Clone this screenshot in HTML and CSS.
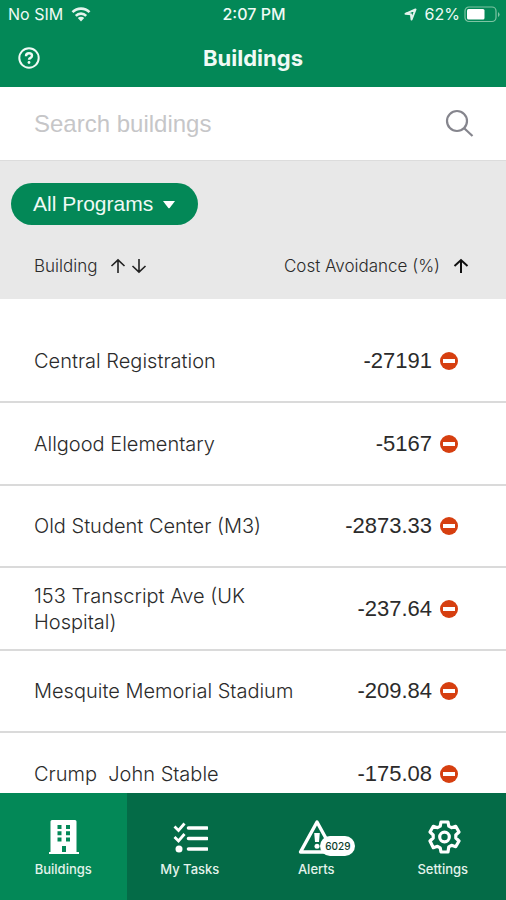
FILE: index.html
```html
<!DOCTYPE html>
<html lang="en">
<head>
<meta charset="utf-8">
<meta name="viewport" content="width=device-width, initial-scale=1">
<title>Buildings</title>
<link rel="stylesheet" href="styles.css">
</head>
<body>
<div class="app">
  <header class="header">
    <div class="status">
      <div class="status-left">
        <span>No SIM</span>
        <svg width="20" height="15" viewBox="0 0 20 15" aria-hidden="true"><g fill="none" stroke="#e4f3ec" stroke-width="2.6"><path d="M1.5 5.2a12 12 0 0 1 17 0"/><path d="M4.8 8.8a7.4 7.4 0 0 1 10.4 0"/></g><path d="M6.8 11a4.6 4.6 0 0 1 6.4 0L10 14.4z" fill="#e4f3ec"/></svg>
      </div>
      <span class="clock">2:07 PM</span>
      <div class="status-right">
        <svg width="13" height="13" viewBox="0 0 13 13" aria-hidden="true"><path d="M1.5 5.8L11.5 1.5L7.6 11.5L6.9 6.2z" fill="none" stroke="#e4f3ec" stroke-width="2" stroke-linejoin="round"/></svg>
        <span>62%</span>
        <svg width="36" height="17" viewBox="0 0 36 17" aria-hidden="true"><rect x="1" y="1" width="31" height="14.500" rx="4" fill="none" stroke="#7fc4a3" stroke-width="1.2"/><rect x="3" y="3" width="17.500" height="10.500" rx="1.500" fill="#fff"/><path d="M34 6v5q1.600-1 1.600-2.500T34 6z" fill="#7fc4a3"/></svg>
      </div>
    </div>
    <div class="titlebar">
      <button class="icon-button" type="button" aria-label="Help">
        <svg width="22" height="22" viewBox="0 0 22 22" aria-hidden="true"><circle cx="11" cy="11" r="9.700" fill="none" stroke="#f0faf5" stroke-width="2"/><path d="M8 9.200q0-2.900 3-2.900t3 2.400q0 1.300-1.500 2.200t-1.500 1.900" fill="none" stroke="#f0faf5" stroke-width="2.400"/><circle cx="11" cy="15.500" r="1.400" fill="#f0faf5"/></svg>
      </button>
      <h1>Buildings</h1>
    </div>
  </header>
  <main class="content">
    <form class="search">
      <input type="search" placeholder="Search buildings" aria-label="Search buildings">
      <button class="icon-button" type="button" aria-label="Search">
        <svg width="30" height="30" viewBox="0 0 30 30" aria-hidden="true"><g fill="none" stroke="#85858d" stroke-width="2.200"><circle cx="12" cy="12" r="10"/><path d="M19.200 19.200L27.500 27"/></g></svg>
      </button>
    </form>
    <div class="filter">
      <button class="pill" type="button">All Programs
        <svg width="14" height="9" viewBox="0 0 14 9" aria-hidden="true"><path d="M1 1h12L7.700 8q-.7.700-1.400 0z" fill="#fff"/></svg>
      </button>
    </div>
    <table class="buildings">
      <colgroup><col class="col-name"><col class="col-shared"><col class="col-value"></colgroup>
      <thead>
        <tr>
          <th class="name" scope="col"><button class="sort" type="button">Building
            <svg width="38" height="16" viewBox="0 0 38 16" aria-hidden="true"><g fill="none" stroke="#222" stroke-width="1.600"><path d="M8 15V2M1.500 8L8 1.800L14.500 8"/><path d="M29 1v13M22.500 8l6.500 6.200L35.500 8"/></g></svg></button></th>
          <th class="value" scope="col" colspan="2"><button class="sort" type="button">Cost Avoidance (%)
            <svg width="16" height="16" viewBox="0 0 16 16" aria-hidden="true"><path d="M8 15V2M1.500 8L8 2L14.500 8" fill="none" stroke="#111" stroke-width="2"/></svg></button></th>
        </tr>
      </thead>
      <tbody>
        <tr class="spacer"><td colspan="3"></td></tr>
        <tr><td class="name" colspan="2">Central Registration</td><td class="value"><span class="amount">-27191 <i class="minus"></i></span></td></tr>
        <tr><td class="name" colspan="2">Allgood Elementary</td><td class="value"><span class="amount">-5167 <i class="minus"></i></span></td></tr>
        <tr><td class="name" colspan="2">Old Student Center (M3)</td><td class="value"><span class="amount">-2873.33 <i class="minus"></i></span></td></tr>
        <tr><td class="name" colspan="2">153 Transcript Ave (UK Hospital)</td><td class="value"><span class="amount">-237.64 <i class="minus"></i></span></td></tr>
        <tr><td class="name" colspan="2">Mesquite Memorial Stadium</td><td class="value"><span class="amount">-209.84 <i class="minus"></i></span></td></tr>
        <tr><td class="name" colspan="2">Crump&nbsp; John Stable</td><td class="value"><span class="amount">-175.08 <i class="minus"></i></span></td></tr>
      </tbody>
    </table>
  </main>
  <nav class="tabs">
    <a class="tab active" href="#buildings" aria-current="page">
      <svg width="36" height="36" viewBox="0 0 36 36" aria-hidden="true"><path fill="#fff" fill-rule="evenodd" d="M7 1h23q1.500 0 1.500 1.500V33H34v2H4v-2h1.500V2.500Q5.500 1 7 1zM12.500 6v4h4V6zM21 6v4h4V6zM12.500 12.300v4h4v-4zM21 12.300v4h4v-4zM12.500 18.600v4h4v-4zM21 18.600v4h4v-4zM17 27v6h4v-6z"/></svg>
      <span>Buildings</span>
    </a>
    <a class="tab" href="#tasks">
      <svg width="36" height="36" viewBox="0 0 36 36" aria-hidden="true"><g fill="none" stroke="#fff"><path stroke-width="3.600" stroke-linecap="round" d="M16.500 9H35M16.500 19.500H35M16.500 30H35"/><path stroke-width="2.800" d="M2.500 7.500l4 4L12.500 4.500M2.500 18l4 4 6-7"/></g><circle cx="7" cy="30" r="3.500" fill="#fff"/></svg>
      <span>My Tasks</span>
    </a>
    <a class="tab" href="#alerts">
      <span class="alert-icon">
        <svg width="36" height="36" viewBox="0 0 36 36" aria-hidden="true"><path d="M19 3L35.500 33H2.500z" fill="none" stroke="#fff" stroke-width="3.400" stroke-linejoin="round"/><path d="M16.200 14h5.600l-.8 9h-4z" fill="#fff"/><circle cx="19" cy="27.300" r="2.500" fill="#fff"/></svg>
        <span class="badge">6029</span>
      </span>
      <span>Alerts</span>
    </a>
    <a class="tab" href="#settings">
      <svg width="36" height="36" viewBox="0 0 36 36" aria-hidden="true"><g fill="none" stroke="#fff" stroke-width="3.200" stroke-linejoin="round"><path d="M16 3h7l.8 4.200 2.700 1.500 4.200-1.400 3.300 5.700-3.200 3v3l3.200 3-3.300 5.700-4.200-1.400-2.700 1.500L23 33h-7l-.8-4.200-2.700-1.500-4.200 1.400L5 22l3.200-3v-3L5 13l3.300-5.700 4.200 1.400 2.700-1.500z"/><circle cx="19.500" cy="18" r="4.800"/></g></svg>
      <span>Settings</span>
    </a>
  </nav>
</div>
</body>
</html>
```
FILE: styles.css
```css
* { box-sizing: border-box; }

body {
  margin: 0;
  background: #fff;
  color: #2b2b2b;
  font-family: Inter, "Liberation Sans", sans-serif;
}

button {
  border: 0;
  padding: 0;
  background: none;
  color: inherit;
  font: inherit;
}

svg { display: block; flex: none; }

.app {
  display: flex;
  flex-direction: column;
  height: 100vh;
}

.header {
  flex: none;
  background: #038857;
  color: #f0faf5;
}

.status {
  display: grid;
  grid-template-columns: 1fr auto 1fr;
  align-items: center;
  height: 28px;
  padding: 0 6px 0 8px;
  font-size: 16px;
}

.status-left,
.status-right {
  display: flex;
  align-items: center;
  gap: 8px;
}

.status-right { justify-content: flex-end; gap: 4px; }
.status-right span { margin-left: 4px; }

.clock { font-weight: 500; }

.titlebar {
  display: grid;
  grid-template-columns: 22px 1fr 22px;
  align-items: center;
  height: 59px;
  padding: 0 18px;
}

h1 {
  margin: 0;
  font-size: 22px;
  line-height: 28px;
  font-weight: 700;
  text-align: center;
}

.content {
  flex: 1;
  min-height: 0;
  overflow-y: auto;
  scrollbar-width: none;
}

.search {
  display: flex;
  align-items: center;
  height: 73px;
  padding: 0 31px 0 34px;
}

.search input {
  flex: 1;
  min-width: 0;
  border: 0;
  padding: 0;
  outline: 0;
  background: none;
  font: 400 24px/32px "Liberation Sans", sans-serif;
}

.search input::placeholder { color: #c6c6c8; }

.filter {
  padding: 22px 11px 8px;
  border-top: 1px solid #dcdcdc;
  background: #e8e8e8;
}

.pill {
  display: flex;
  align-items: center;
  gap: 9px;
  height: 42px;
  padding: 0 22px;
  border-radius: 21px;
  background: #038857;
  color: #f0faf5;
  font-family: "Liberation Sans", sans-serif;
  font-size: 21px;
}

.buildings {
  width: 100%;
  table-layout: fixed;
  border-collapse: collapse;
}

.col-name { width: 45%; }
.col-shared { width: 15%; }
.col-value { width: 40%; }

.buildings th {
  height: 66px;
  background: #e8e8e8;
  font-size: 17px;
  font-weight: 300;
  white-space: nowrap;
}

.sort {
  display: inline-flex;
  align-items: center;
  gap: 13px;
}

.name { padding: 0 0 0 34px; text-align: left; }
.value { padding: 0 48px 0 0; text-align: right; }
th.value { padding-right: 37px; }

.buildings td {
  height: 82px;
  border-bottom: 2px solid #dadada;
  font-size: 20px;
  line-height: 26px;
}

.buildings tr:nth-child(odd) td { height: 83px; }
.buildings .spacer:nth-child(odd) td { height: 21px; border: 0; }

td.name { font-weight: 300; }

.amount {
  display: inline-flex;
  align-items: center;
  gap: 8px;
  font-family: "Liberation Sans", sans-serif;
  font-size: 22px;
}

.minus {
  display: grid;
  place-items: center;
  width: 18px;
  height: 18px;
  border-radius: 50%;
  background: #d63f10;
}

.minus::before {
  content: "";
  width: 12px;
  height: 4px;
  background: #fff;
}

.tabs {
  display: grid;
  grid-template-columns: repeat(4, 1fr);
  flex: none;
  height: 107px;
  background: #046b47;
}

.tab {
  display: flex;
  flex-direction: column;
  align-items: center;
  gap: 6px;
  padding-top: 26px;
  color: #e4f3ec;
  font-size: 13px;
  line-height: 16px;
  font-weight: 500;
  text-decoration: none;
}

.tab.active { background: #038857; }

.alert-icon { position: relative; }

.badge {
  position: absolute;
  top: 17px;
  left: 22px;
  padding: 0 5px;
  border-radius: 10px;
  background: #fff;
  color: #0b3d2a;
  font-size: 10px;
  line-height: 20px;
}
```
